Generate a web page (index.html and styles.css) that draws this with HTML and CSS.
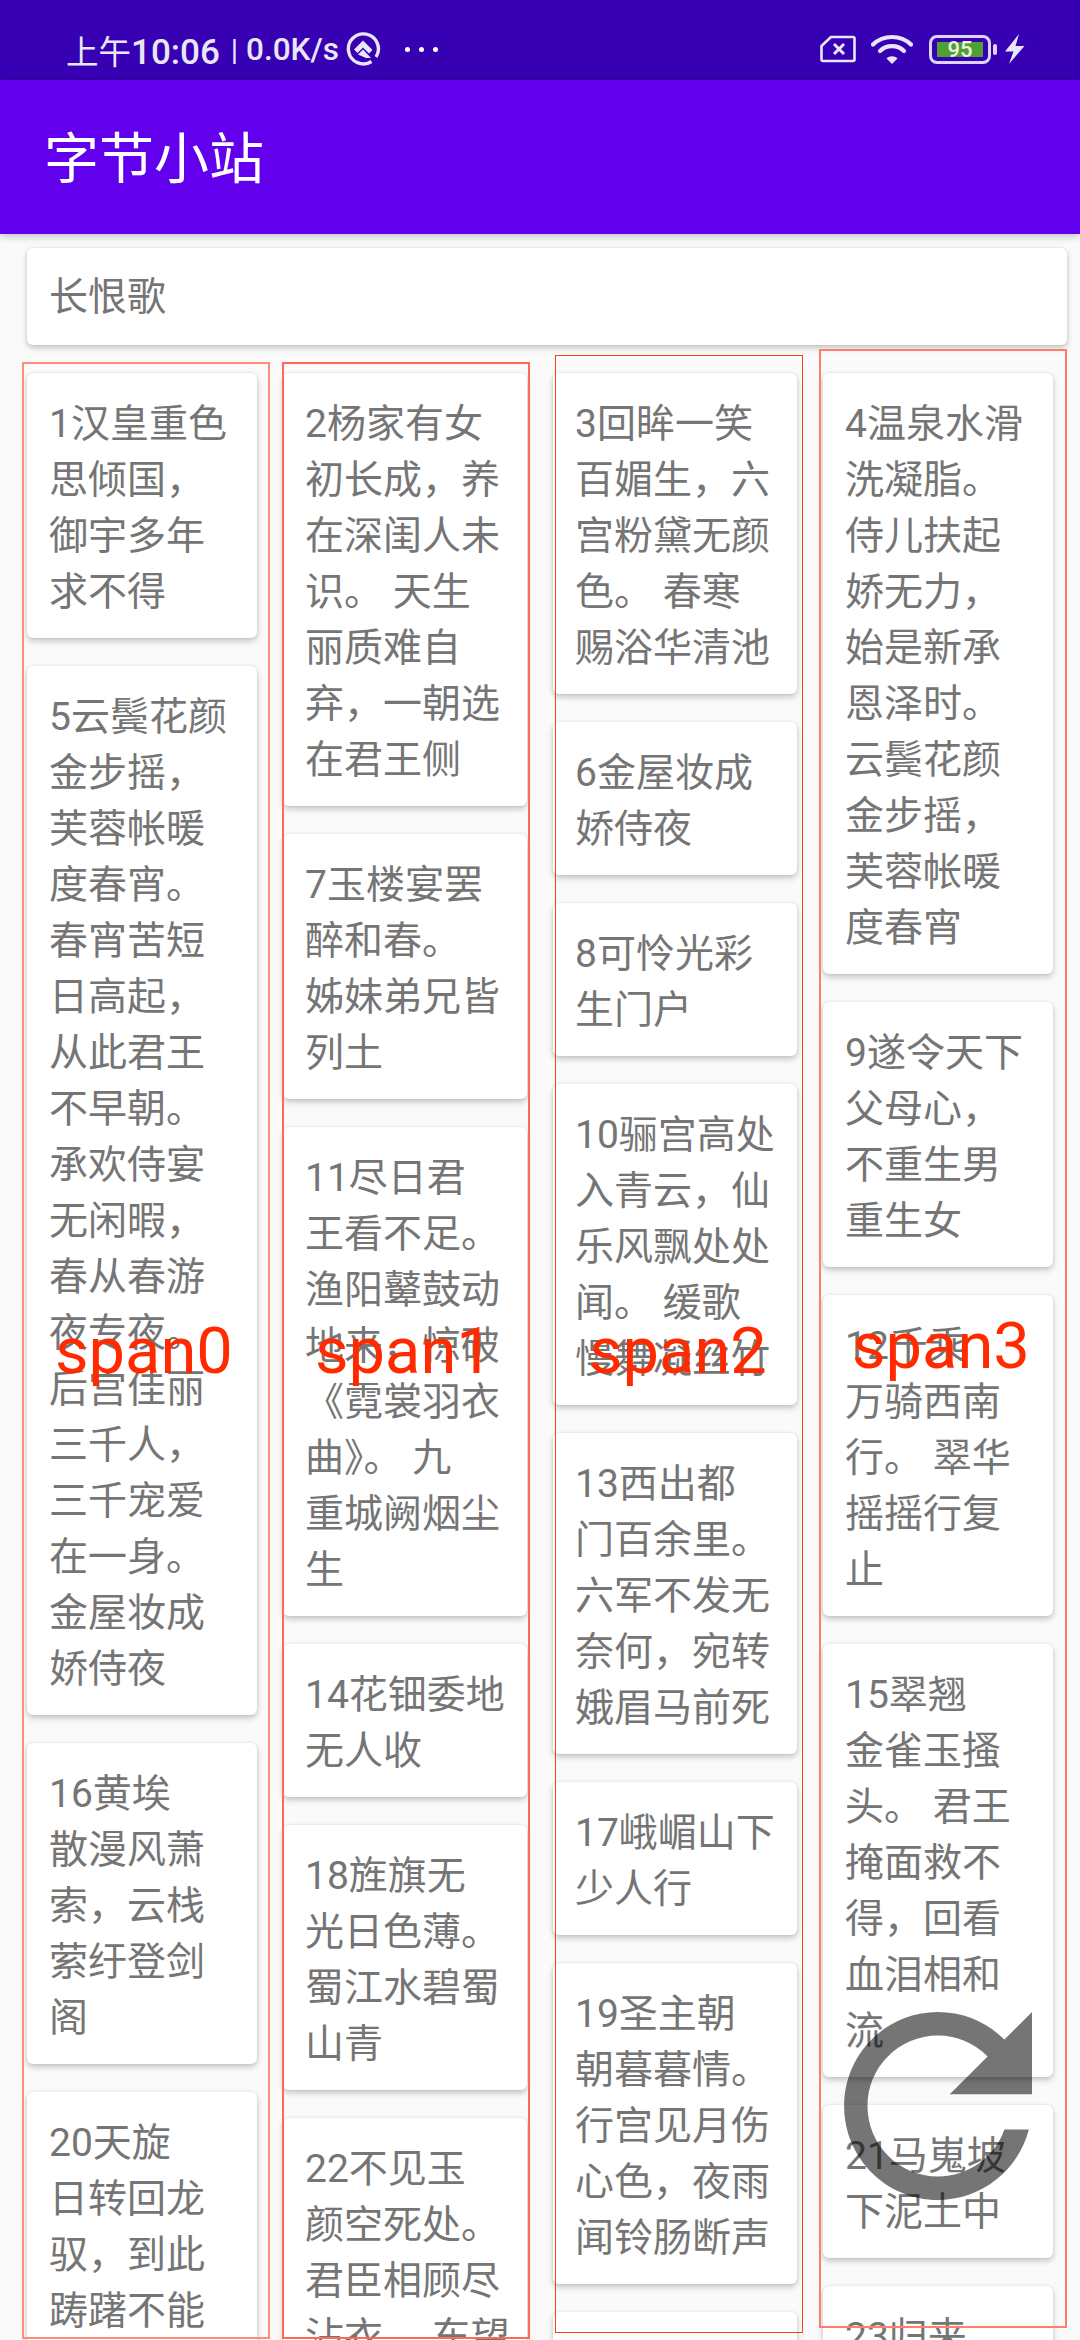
FILE: index.html
```html
<!DOCTYPE html>
<html lang="zh-CN">
<head>
  <meta charset="UTF-8" />
  <meta name="viewport" content="width=device-width, initial-scale=1.0" />
  <title>字节小站</title>
  <link rel="stylesheet" href="styles.css">
</head>
<body>
  <div class="screen">
    <div class="status-bar">
      <span class="status-time">上午<b>10:06</b></span>
      <span class="status-speed"><i>|</i> 0.0K/s</span>
      <svg class="status-ring" width="36" height="36" viewBox="0 0 36 36">
        <path d="M26.5 30.5A15 15 0 1 1 31 26" fill="none" stroke="#e9e6f7" stroke-width="3.4" />
        <path d="M18 9.5L27.5 19L24 22.5L18 16.5L12.5 22L9 18.5z" fill="#e9e6f7" />
        <path d="M13 23.5L18 18.5L26 27L21 27z" fill="#e9e6f7" />
      </svg>
      <span class="status-dots"><i></i><i></i><i></i></span>
      <span class="status-right">
        <svg width="36" height="28" viewBox="0 0 36 28">
          <path d="M11 2H33a1.5 1.5 0 0 1 1.5 1.5V24.5a1.5 1.5 0 0 1-1.5 1.5H3a1.5 1.5 0 0 1-1.5-1.5V11z" fill="none" stroke="#e9e6f7" stroke-width="2.6" stroke-linejoin="round" />
          <path d="M14 9L24 19M24 9L14 19" stroke="#e9e6f7" stroke-width="3" fill="none" />
        </svg>
        <svg class="status-wifi" width="42" height="30" viewBox="0 0 42 30">
          <path d="M2 10.5C12.5 0.5 29.5 0.5 40 10.5" fill="none" stroke="#e9e6f7" stroke-width="4.2" stroke-linecap="round" />
          <path d="M9 17C15.5 10.5 26.5 10.5 33 17" fill="none" stroke="#e9e6f7" stroke-width="4.2" stroke-linecap="round" />
          <path d="M21 30L15.5 24.5C18.5 21.5 23.5 21.5 26.5 24.5z" fill="#e9e6f7" />
        </svg>
        <span class="battery">
          <span class="battery-level">95</span>
        </span>
        <span class="battery-nub"></span>
        <svg class="status-bolt" width="20" height="30" viewBox="0 0 20 30">
          <path d="M14 0L0 17.5H8.5L4 30L19.5 12H10.5z" fill="#e9e6f7" />
        </svg>
      </span>
    </div>

    <header class="toolbar">字节小站</header>

    <main class="content">
      <div class="card search-card">长恨歌</div>

      <div class="waterfall">
        <div class="column">
          <div class="card poem">1汉皇重色<br>思倾国，<br>御宇多年<br>求不得</div>
          <div class="card poem">5云鬓花颜<br>金步摇，<br>芙蓉帐暖<br>度春宵。<br>春宵苦短<br>日高起，<br>从此君王<br>不早朝。<br>承欢侍宴<br>无闲暇，<br>春从春游<br>夜专夜。<br>后宫佳丽<br>三千人，<br>三千宠爱<br>在一身。<br>金屋妆成<br>娇侍夜</div>
          <div class="card poem">16黄埃<br>散漫风萧<br>索，云栈<br>萦纡登剑<br>阁</div>
          <div class="card poem">20天旋<br>日转回龙<br>驭，到此<br>踌躇不能<br>去</div>
        </div>
        <div class="column">
          <div class="card poem">2杨家有女<br>初长成，养<br>在深闺人未<br>识。 天生<br>丽质难自<br>弃，一朝选<br>在君王侧</div>
          <div class="card poem">7玉楼宴罢<br>醉和春。<br>姊妹弟兄皆<br>列土</div>
          <div class="card poem">11尽日君<br>王看不足。<br>渔阳鼙鼓动<br>地来，惊破<br>《霓裳羽衣<br>曲》。 九<br>重城阙烟尘<br>生</div>
          <div class="card poem">14花钿委地<br>无人收</div>
          <div class="card poem">18旌旗无<br>光日色薄。<br>蜀江水碧蜀<br>山青</div>
          <div class="card poem">22不见玉<br>颜空死处。<br>君臣相顾尽<br>沾衣。 东望</div>
        </div>
        <div class="column">
          <div class="card poem">3回眸一笑<br>百媚生，六<br>宫粉黛无颜<br>色。 春寒<br>赐浴华清池</div>
          <div class="card poem">6金屋妆成<br>娇侍夜</div>
          <div class="card poem">8可怜光彩<br>生门户</div>
          <div class="card poem">10骊宫高处<br>入青云，仙<br>乐风飘处处<br>闻。 缓歌<br>慢舞凝丝竹</div>
          <div class="card poem">13西出都<br>门百余里。<br>六军不发无<br>奈何，宛转<br>娥眉马前死</div>
          <div class="card poem">17峨嵋山下<br>少人行</div>
          <div class="card poem">19圣主朝<br>朝暮暮情。<br>行宫见月伤<br>心色，夜雨<br>闻铃肠断声</div>
          <div class="card poem">24芙蓉如面</div>
        </div>
        <div class="column">
          <div class="card poem">4温泉水滑<br>洗凝脂。<br>侍儿扶起<br>娇无力，<br>始是新承<br>恩泽时。<br>云鬓花颜<br>金步摇，<br>芙蓉帐暖<br>度春宵</div>
          <div class="card poem">9遂令天下<br>父母心，<br>不重生男<br>重生女</div>
          <div class="card poem">12千乘<br>万骑西南<br>行。 翠华<br>摇摇行复<br>止</div>
          <div class="card poem">15翠翘<br>金雀玉搔<br>头。 君王<br>掩面救不<br>得，回看<br>血泪相和<br>流</div>
          <div class="card poem">21马嵬坡<br>下泥土中</div>
          <div class="card poem">23归来</div>
        </div>
      </div>
    </main>

    <!-- debug overlay for the spans -->
    <div class="span-box span-box-0"></div>
    <div class="span-box span-box-1"></div>
    <div class="span-box span-box-2"></div>
    <div class="span-box span-box-3"></div>
    <span class="span-label span-label-0">span0</span>
    <span class="span-label span-label-1">span1</span>
    <span class="span-label span-label-2">span2</span>
    <span class="span-label span-label-3">span3</span>

    <svg class="refresh" width="282" height="282" viewBox="0 0 24 24">
      <path d="M17.65 6.35C16.2 4.9 14.21 4 12 4c-4.42 0-7.99 3.58-7.99 8s3.57 8 7.99 8c3.73 0 6.84-2.55 7.73-6h-2.08c-.82 2.33-3.04 4-5.65 4-3.31 0-6-2.69-6-6s2.69-6 6-6c1.66 0 3.14.69 4.22 1.78L13 11h7V4l-2.35 2.35z" />
    </svg>
  </div>
</body>
</html>
```

FILE: styles.css
```css
* {
  margin: 0;
  padding: 0;
  box-sizing: border-box;
}

html,
body {
  height: 2340px;
  overflow: hidden;
}

body {
  font-family: Roboto, "Noto Sans CJK SC", sans-serif;
  background-color: #fafafa;
  color: #757575;
}

.screen {
  position: relative;
  height: 2340px;
  overflow: hidden;
}

/* status bar */
.status-bar {
  display: flex;
  align-items: center;
  height: 80px;
  padding-top: 18px;
  padding-left: 66px;
  background-color: #3700b3;
  color: #e9e6f7;
  font-size: 32.5px;
  white-space: nowrap;
}

.status-time b {
  font-size: 35px;
  font-weight: 500;
}

.status-speed {
  margin-left: 11px;
  font-size: 31.5px;
  font-weight: 500;
}

.status-speed i {
  font-style: normal;
  font-weight: 400;
  font-size: 30px;
}

.status-ring {
  margin-left: 6px;
}

.status-dots {
  display: flex;
  gap: 9px;
  margin-left: 24px;
}

.status-dots i {
  width: 5px;
  height: 5px;
  border-radius: 50%;
  background-color: #fff;
}

.status-right {
  display: flex;
  align-items: center;
  margin-left: auto;
  margin-right: 55px;
}

.status-wifi {
  margin-left: 15px;
}

.battery {
  display: flex;
  width: 62px;
  height: 29px;
  margin-left: 16px;
  padding: 4px 5px;
  border: 3px solid #dcd3f6;
  border-radius: 8px;
}

.battery-level {
  flex: 1;
  background-color: #4f9f32;
  color: #eef3e4;
  font-size: 22px;
  font-weight: 500;
  line-height: 16px;
  text-align: center;
}

.battery-nub {
  width: 4px;
  height: 11px;
  margin-left: 2px;
  border-radius: 2px;
  background-color: #dcd3f6;
}

.status-bolt {
  margin-left: 8px;
}

/* toolbar */
.toolbar {
  position: relative;
  height: 154px;
  padding-left: 44px;
  background-color: #6200ee;
  box-shadow: 0 2px 8px rgba(0, 0, 0, 0.25);
  color: #fff;
  font-size: 55px;
  line-height: 159px;
}

/* cards */
.content {
  padding: 14px 13px 0 27px;
}

.card {
  background-color: #fff;
  border-radius: 6px;
  box-shadow: 0 3px 6px rgba(0, 0, 0, 0.22), 0 0 3px rgba(0, 0, 0, 0.08);
  font-size: 39px;
}

.search-card {
  height: 97px;
  padding-left: 22px;
  line-height: 99px;
}

.waterfall {
  display: grid;
  grid-template-columns: 230px 244px 244px 230px;
  column-gap: 26px;
  align-items: start;
  margin-top: 28px;
}

.column {
  display: flex;
  flex-direction: column;
  gap: 28px;
}

.poem {
  padding: 23px 0 18px 22px;
  line-height: 56px;
  white-space: nowrap;
}

/* overlay */
.span-box {
  position: absolute;
  border: 2px solid #ff6a50;
}

.span-box-0 {
  left: 22px;
  top: 362px;
  width: 248px;
  height: 1977px;
  border-color: #ff8d7a;
}

.span-box-1 {
  left: 282px;
  top: 362px;
  width: 248px;
  height: 1977px;
}

.span-box-2 {
  left: 555px;
  top: 355px;
  width: 248px;
  height: 1978px;
  border-width: 1.5px;
  border-color: #ff3f20;
}

.span-box-3 {
  left: 819px;
  top: 349px;
  width: 248px;
  height: 1979px;
  border-color: #ff7f6a;
}

.span-label {
  position: absolute;
  color: #ff2a00;
  font-size: 65px;
  line-height: 72px;
}

.span-label-0 {
  left: 55px;
  top: 1315px;
}

.span-label-1 {
  left: 315px;
  top: 1315px;
}

.span-label-2 {
  left: 589px;
  top: 1315px;
}

.span-label-3 {
  left: 852px;
  top: 1310px;
}

.refresh {
  position: absolute;
  left: 797px;
  top: 1965px;
  fill: rgba(0, 0, 0, 0.54);
}
```
